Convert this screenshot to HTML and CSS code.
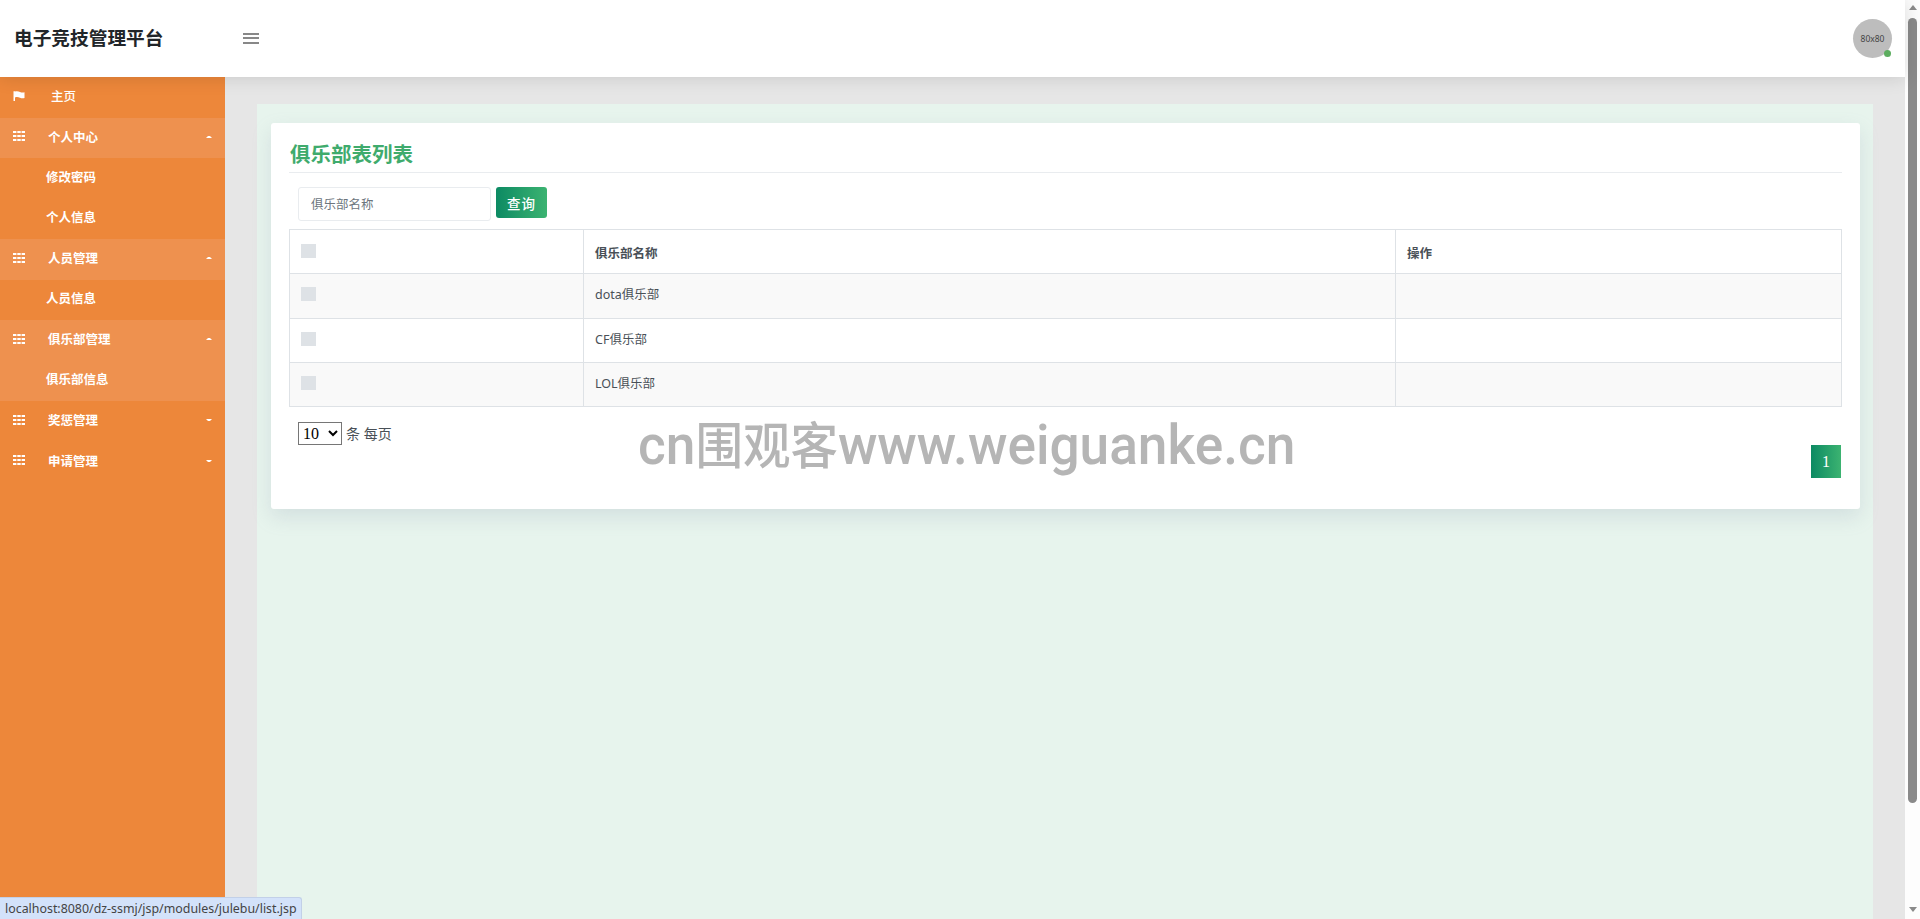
FILE: index.html
```html
<!DOCTYPE html>
<html lang="zh-CN">
<head>
    <meta charset="UTF-8" />
    <title>电子竞技管理平台</title>
    <link rel="stylesheet" href="styles.css">
</head>
<body>
    <div class="window">
        <div class="page">
            <header class="topbar">
                <h1 class="brand">电子竞技管理平台</h1>
                <div class="burger"><span></span><span></span><span></span></div>
                <div class="avatar">80x80<i class="online"></i></div>
            </header>

            <div class="layout">
                <nav class="sidebar">
                    <a class="nav-item home">
                        <svg class="nav-icon" viewBox="0 0 12 10"><path d="M0.500 0.300h1.500v9.700H0.500z M2 0.600C4 -0.300 5.500 0.300 7 1c1.500 0.600 3 0.700 4.500 0.200V7C10 7.600 8.500 7.400 7 6.800 5.500 6.100 4 5.600 2 6.400z" fill="#fff"/></svg>
                        <span class="nav-text">主页</span>
                    </a>
                    <a class="nav-item open">
                        <svg class="nav-icon" viewBox="0 0 12 10"><path d="M0 0h3.400v2H0zM4.300 0h3.400v2H4.300zM8.600 0H12v2H8.600zM0 4h3.400v2H0zM4.300 4h3.400v2H4.300zM8.600 4H12v2H8.600zM0 8h3.400v2H0zM4.300 8h3.400v2H4.300zM8.600 8H12v2H8.600z" fill="#fff"/></svg>
                        <span class="nav-text">个人中心</span>
                        <svg class="caret" viewBox="0 0 6 2"><path d="M0 2L2 0h2l2 2z" fill="#fff"/></svg>
                    </a>
                    <a class="nav-sub">修改密码</a>
                    <a class="nav-sub">个人信息</a>
                    <a class="nav-item open">
                        <svg class="nav-icon" viewBox="0 0 12 10"><path d="M0 0h3.400v2H0zM4.300 0h3.400v2H4.300zM8.600 0H12v2H8.600zM0 4h3.400v2H0zM4.300 4h3.400v2H4.300zM8.600 4H12v2H8.600zM0 8h3.400v2H0zM4.300 8h3.400v2H4.300zM8.600 8H12v2H8.600z" fill="#fff"/></svg>
                        <span class="nav-text">人员管理</span>
                        <svg class="caret" viewBox="0 0 6 2"><path d="M0 2L2 0h2l2 2z" fill="#fff"/></svg>
                    </a>
                    <a class="nav-sub">人员信息</a>
                    <a class="nav-item open">
                        <svg class="nav-icon" viewBox="0 0 12 10"><path d="M0 0h3.400v2H0zM4.300 0h3.400v2H4.300zM8.600 0H12v2H8.600zM0 4h3.400v2H0zM4.300 4h3.400v2H4.300zM8.600 4H12v2H8.600zM0 8h3.400v2H0zM4.300 8h3.400v2H4.300zM8.600 8H12v2H8.600z" fill="#fff"/></svg>
                        <span class="nav-text">俱乐部管理</span>
                        <svg class="caret" viewBox="0 0 6 2"><path d="M0 2L2 0h2l2 2z" fill="#fff"/></svg>
                    </a>
                    <a class="nav-sub active">俱乐部信息</a>
                    <a class="nav-item">
                        <svg class="nav-icon" viewBox="0 0 12 10"><path d="M0 0h3.400v2H0zM4.300 0h3.400v2H4.300zM8.600 0H12v2H8.600zM0 4h3.400v2H0zM4.300 4h3.400v2H4.300zM8.600 4H12v2H8.600zM0 8h3.400v2H0zM4.300 8h3.400v2H4.300zM8.600 8H12v2H8.600z" fill="#fff"/></svg>
                        <span class="nav-text">奖惩管理</span>
                        <svg class="caret" viewBox="0 0 6 2"><path d="M0 0h6L4 2H2z" fill="#fff"/></svg>
                    </a>
                    <a class="nav-item">
                        <svg class="nav-icon" viewBox="0 0 12 10"><path d="M0 0h3.400v2H0zM4.300 0h3.400v2H4.300zM8.600 0H12v2H8.600zM0 4h3.400v2H0zM4.300 4h3.400v2H4.300zM8.600 4H12v2H8.600zM0 8h3.400v2H0zM4.300 8h3.400v2H4.300zM8.600 8H12v2H8.600z" fill="#fff"/></svg>
                        <span class="nav-text">申请管理</span>
                        <svg class="caret" viewBox="0 0 6 2"><path d="M0 0h6L4 2H2z" fill="#fff"/></svg>
                    </a>
                </nav>

                <main class="content">
                    <div class="panel">
                        <section class="card">
                            <h2 class="card-title">俱乐部表列表</h2>
                            <div class="search-row">
                                <input class="search-input" type="text" placeholder="俱乐部名称">
                                <button class="search-btn">查询</button>
                            </div>
                            <table class="club-table">
                                <colgroup>
                                    <col class="col-check">
                                    <col class="col-name">
                                    <col>
                                </colgroup>
                                <thead>
                                    <tr>
                                        <th class="check-cell"><span class="fake-check"></span></th>
                                        <th>俱乐部名称</th>
                                        <th>操作</th>
                                    </tr>
                                </thead>
                                <tbody>
                                    <tr class="row-first">
                                        <td class="check-cell"><span class="fake-check"></span></td>
                                        <td>dota俱乐部</td>
                                        <td></td>
                                    </tr>
                                    <tr>
                                        <td class="check-cell"><span class="fake-check"></span></td>
                                        <td>CF俱乐部</td>
                                        <td></td>
                                    </tr>
                                    <tr>
                                        <td class="check-cell"><span class="fake-check"></span></td>
                                        <td>LOL俱乐部</td>
                                        <td></td>
                                    </tr>
                                </tbody>
                            </table>
                            <div class="page-size">
                                <select class="size-select">
                                    <option>10</option>
                                </select>
                                <span>条 每页</span>
                            </div>
                            <div class="pager">
                                <a class="page-num">1</a>
                            </div>
                        </section>
                    </div>
                </main>
            </div>

            <div class="watermark">cn<span class="wm-cjk">围观客</span>www.weiguanke.cn</div>
            <div class="status-link">localhost:8080/dz-ssmj/jsp/modules/julebu/list.jsp</div>
        </div>

        <div class="scrollbar">
            <span class="arrow-up"></span>
            <div class="track"><div class="thumb"></div></div>
            <span class="arrow-down"></span>
        </div>
    </div>
</body>
</html>
```

FILE: styles.css
```css
:root {
    --orange: #ed873a;
    --orange-light: #ee914f;
    --green-start: #0c8a63;
    --green-end: #3cb371;
    --line: #dee2e6;
    --text: #495057;
}
* {
    box-sizing: border-box;
}
html, body {
    margin: 0;
    height: 100%;
    overflow: hidden;
}
body {
    font-family: "Noto Sans", "Noto Sans CJK SC", sans-serif;
    font-size: 12.5px;
    color: var(--text);
}
.window {
    display: flex;
    height: 100%;
}
.page {
    position: relative;
    flex: 1;
    display: flex;
    flex-direction: column;
    min-width: 0;
}
.topbar {
    position: relative;
    z-index: 2;
    height: 77px;
    flex: none;
    display: flex;
    align-items: center;
    background: #fff;
    box-shadow: 0 0 18px rgba(0, 0, 0, 0.14);
    padding: 0 13px 0 14px;
}
.brand {
    margin: 0 0 5px;
    width: 229px;
    font-size: 18.7px;
    font-weight: 700;
    color: #212529;
}
.burger {
    display: flex;
    flex-direction: column;
    gap: 2.500px;
    width: 16px;
    margin-bottom: 1px;
}
.burger span {
    height: 2px;
    background: #888;
}
.avatar {
    position: relative;
    margin-left: auto;
    width: 39px;
    height: 39px;
    border-radius: 50%;
    background: #bdbdbd;
    color: #444;
    font-size: 8.500px;
    line-height: 39px;
    text-align: center;
}
.online {
    position: absolute;
    right: 1px;
    bottom: 1px;
    width: 7px;
    height: 7px;
    border-radius: 50%;
    background: #5cad5f;
}
.layout {
    flex: 1;
    display: flex;
    min-height: 0;
}
.sidebar {
    width: 225px;
    flex: none;
    background: var(--orange);
    color: #fff;
    font-weight: 700;
}
.nav-item {
    position: relative;
    display: flex;
    align-items: center;
    height: 40.5px;
    padding: 0 0 3px 13px;
}
.nav-item.open, .nav-sub.active {
    background: var(--orange-light);
}
.nav-item.home {
    font-weight: 500;
}
.nav-icon {
    width: 12px;
    height: 10px;
    flex: none;
}
.nav-text {
    margin-left: 23px;
}
.home .nav-text {
    margin-left: 26px;
}
.caret {
    position: absolute;
    right: 13px;
    top: 18px;
    width: 6px;
    height: 2px;
}
.nav-sub {
    display: flex;
    align-items: center;
    height: 40.5px;
    padding: 0 0 4px 46px;
}
.content {
    flex: 1;
    min-width: 0;
    background: #e6e6e6;
    padding: 27px 32px 0;
}
.panel {
    height: 100%;
    background: #e7f4ed;
    padding: 19px 13px 0 14px;
}
.card {
    background: #fff;
    border-radius: 3px;
    padding: 0 18px 31px;
    box-shadow: 0 8px 20px rgba(130, 145, 170, 0.2);
}
.card-title {
    margin: 0;
    height: 50px;
    padding: 16px 0 0 1px;
    font-size: 20.5px;
    line-height: 30px;
    font-weight: 600;
    color: #3fab6d;
    border-bottom: 1px solid #e9ecef;
}
.search-row {
    display: flex;
    align-items: flex-start;
    gap: 5px;
    height: 42px;
    margin-top: 14px;
    padding-left: 9px;
}
.search-input {
    width: 193px;
    height: 34px;
    padding: 0 12px;
    border: 1px solid #e9ecef;
    border-radius: 3px;
    font: inherit;
    outline: none;
}
.search-input::placeholder {
    color: #6c757d;
}
.search-btn {
    width: 51px;
    height: 31px;
    padding: 0;
    border: none;
    border-radius: 3px;
    background: linear-gradient(to right, var(--green-start), var(--green-end));
    color: #fff;
    font-family: inherit;
    font-size: 13.5px;
    font-weight: 500;
    letter-spacing: 1px;
}
.club-table {
    width: 100%;
    table-layout: fixed;
    border-collapse: collapse;
}
.col-check {
    width: 294px;
}
.col-name {
    width: 812px;
}
.club-table th, .club-table td {
    border: 1px solid var(--line);
    padding: 0 11px;
    text-align: left;
    height: 44px;
}
.club-table th {
    font-weight: 700;
    padding-top: 2px;
}
.club-table .row-first td {
    height: 45px;
}
.club-table tbody tr:nth-child(odd) {
    background: #f9f9f9;
}
.club-table td {
    padding-bottom: 5px;
}
.club-table .check-cell {
    padding: 0 0 0 11px;
    vertical-align: top;
}
.fake-check {
    display: block;
    width: 15px;
    height: 14px;
    margin-top: 14px;
    background: var(--line);
}
td .fake-check {
    margin-top: 13px;
}
.page-size {
    display: flex;
    align-items: center;
    gap: 4px;
    height: 24px;
    margin-top: 14px;
    padding-left: 9px;
    font-size: 14px;
}
.size-select {
    width: 44px;
    height: 23px;
    padding: 0;
    background: #fff;
    border: 1px solid #767676;
    color: #000;
    font-family: "Liberation Serif", serif;
    font-size: 16px;
}
.pager {
    display: flex;
    justify-content: flex-end;
    padding-right: 1px;
}
.page-num {
    width: 30px;
    height: 33px;
    background: linear-gradient(to right, var(--green-start), var(--green-end));
    color: #fff;
    font-family: "Liberation Serif", serif;
    font-size: 16px;
    line-height: 33px;
    text-align: center;
}
.watermark {
    position: absolute;
    z-index: 3;
    left: 638px;
    top: 407px;
    font-family: Roboto, "Noto Sans CJK SC", sans-serif;
    font-size: 56px;
    line-height: 70px;
    font-weight: 500;
    color: #b5b5b5;
    white-space: nowrap;
    transform: scaleX(0.95);
    transform-origin: left center;
}
.wm-cjk {
    font-family: "Noto Sans CJK SC", sans-serif;
    font-size: 50px;
}
.status-link {
    position: absolute;
    z-index: 3;
    left: 0;
    bottom: 0;
    width: 302px;
    height: 22px;
    padding-left: 5px;
    background: #d3e2fa;
    border: 1px solid #c2d0e8;
    border-width: 1px 1px 0 0;
    border-top-right-radius: 3px;
    color: #444;
    font-size: 12.400px;
    line-height: 22px;
    white-space: nowrap;
}
.scrollbar {
    width: 15px;
    flex: none;
    display: flex;
    flex-direction: column;
    align-items: center;
    background: #fdfdfd;
    padding: 5px 0 7px;
}
.arrow-up, .arrow-down {
    width: 0;
    height: 0;
    border-left: 4.5px solid transparent;
    border-right: 4.5px solid transparent;
}
.arrow-up {
    border-bottom: 5px solid #8a8a8a;
}
.arrow-down {
    border-top: 5px solid #8a8a8a;
}
.track {
    flex: 1;
    width: 100%;
    padding-top: 8px;
}
.thumb {
    width: 9px;
    height: 785px;
    margin-left: 3px;
    border-radius: 5px;
    background: #8a8a8a;
}
```
